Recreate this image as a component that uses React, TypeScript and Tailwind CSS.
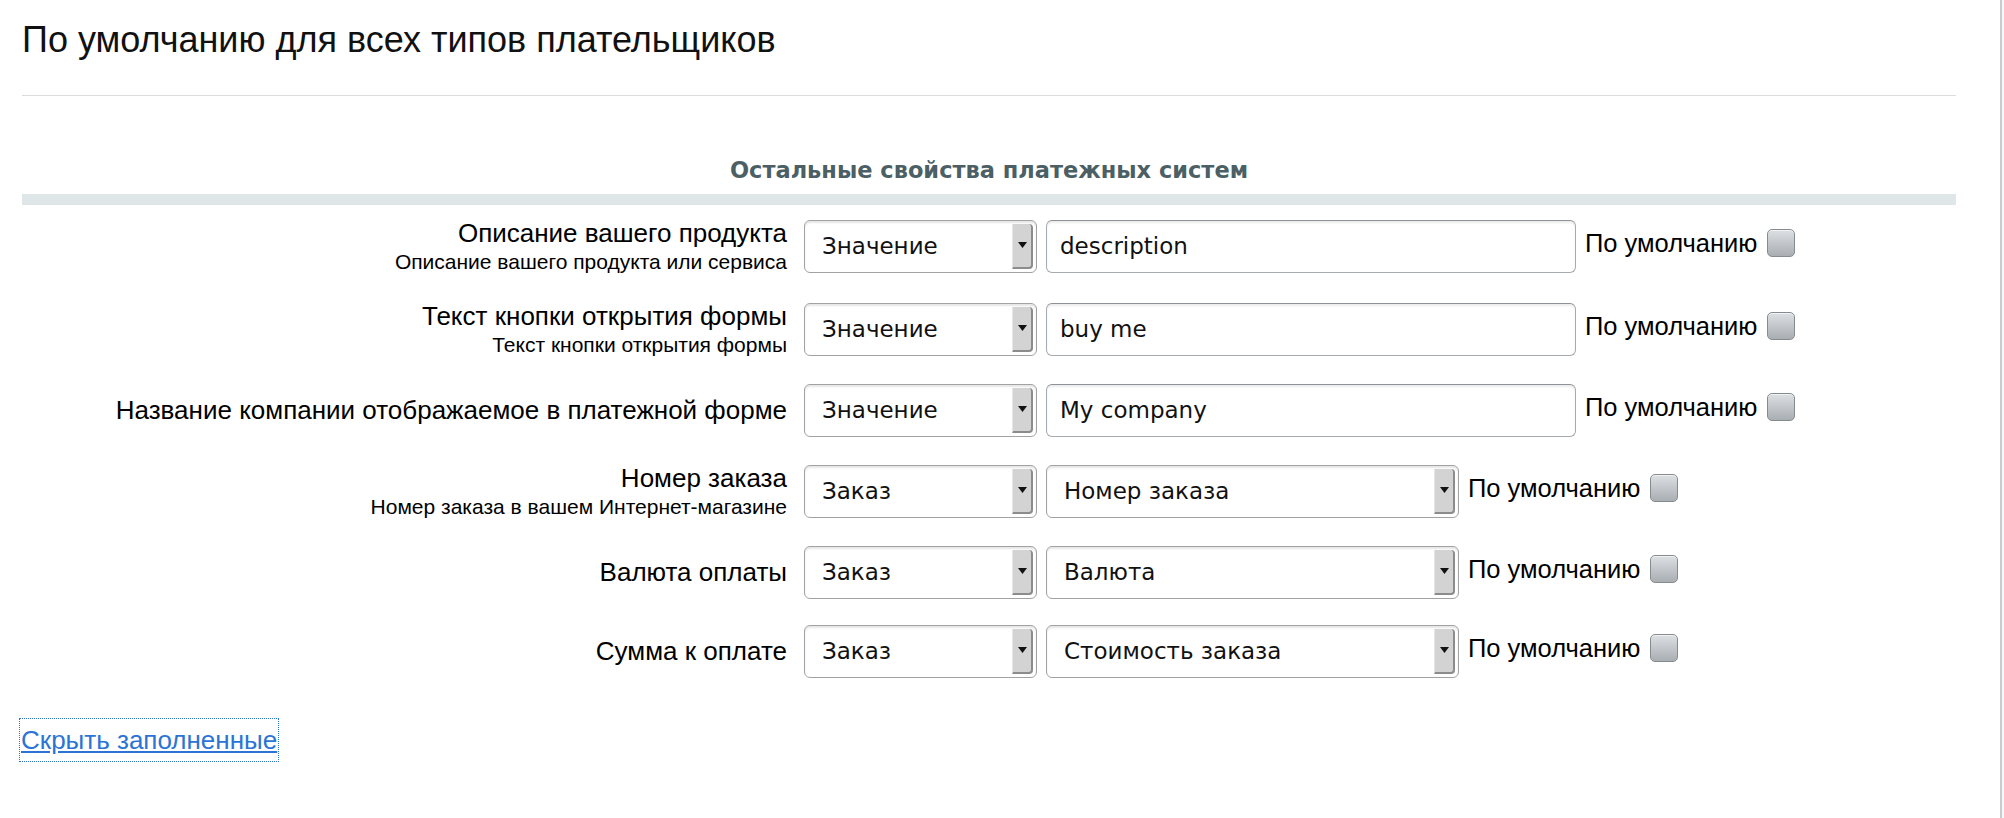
import React from "react";

const sans = "font-['Liberation_Sans',Arial,sans-serif]";
const ctrl = "font-['DejaVu_Sans',Verdana,sans-serif]";

function Arrow() {
  return (
    <div className="absolute bottom-[3px] right-[3px] top-[3px] flex w-[21px] items-center justify-center rounded-r-[4px] border-b-2 border-r-2 border-l border-[#8c8c8c] border-l-[#e6e6e6] bg-[#d3d3d3]">
      <svg width="9" height="6" viewBox="0 0 9 6" className="-mt-[2px]">
        <polygon points="0,0 9,0 4.5,6" fill="#111" />
      </svg>
    </div>
  );
}

function SelectBox({ value, wide }: { value: string; wide?: boolean }) {
  return (
    <div
      className={
        (wide ? "w-[413px] " : "w-[233px] ") +
        "relative flex h-[53px] shrink-0 items-center rounded-[6px] border border-[#a2a2a2] bg-white pl-[17px] shadow-[inset_0_2px_2px_rgba(0,0,0,0.10)]"
      }
    >
      <span className={`${ctrl} text-[23px] leading-[27px] text-[#111]`}>{value}</span>
      <Arrow />
    </div>
  );
}

function TextBox({ value }: { value: string }) {
  return (
    <div className="flex h-[53px] w-[530px] shrink-0 items-center rounded-[6px] border border-[#a6abb0] border-t-[#8d9298] bg-white pl-[13px] shadow-[inset_0_2px_2px_rgba(0,0,0,0.08)]">
      <span className={`${ctrl} text-[23px] leading-[27px] text-[#111]`}>{value}</span>
    </div>
  );
}

function Checkbox() {
  return (
    <div className="h-[28px] w-[28px] rounded-[5px] border border-[#868b90] bg-gradient-to-b from-[#dde0e3] to-[#a9aeb3] shadow-[inset_0_1px_0_rgba(255,255,255,0.6)]" />
  );
}

type Row = {
  label: string;
  sub?: string;
  first: string;
  second: string;
  secondSelect?: boolean;
};

const rows: Row[] = [
  { label: "Описание вашего продукта", sub: "Описание вашего продукта или сервиса", first: "Значение", second: "description" },
  { label: "Текст кнопки открытия формы", sub: "Текст кнопки открытия формы", first: "Значение", second: "buy me" },
  { label: "Название компании отображаемое в платежной форме", first: "Значение", second: "My company" },
  { label: "Номер заказа", sub: "Номер заказа в вашем Интернет-магазине", first: "Заказ", second: "Номер заказа", secondSelect: true },
  { label: "Валюта оплаты", first: "Заказ", second: "Валюта", secondSelect: true },
  { label: "Сумма к оплате", first: "Заказ", second: "Стоимость заказа", secondSelect: true },
];

export default function App() {
  return (
    <div className="flex min-h-[818px] w-[2004px] bg-[#f5f7f8]">
      <div className="w-[2002px] shrink-0 border-r-2 border-[#c8cdd0] bg-white pl-[22px] pr-[44px]">
        <div className={`${sans} pt-[19px] text-[36px] leading-[41px] text-[#111]`}>
          По умолчанию для всех типов плательщиков
        </div>
        <div className="mt-[35px] h-px bg-[#dcdcdc]" />

        <div className="mt-[61px] border-b-[11px] border-[#dfe6e8] pb-[10px] text-center">
          <span className={`${ctrl} text-[22.5px] font-bold leading-[26px] text-[#4b5f65]`}>
            Остальные свойства платежных систем
          </span>
        </div>

        <div>
          {rows.map((r, i) => (
            <div key={i} className="flex items-center py-[13px]">
              <div className={`${sans} w-[782px] shrink-0 pr-[17px] text-right text-black`}>
                <div className="text-[26px] leading-[31px]">{r.label}</div>
                {r.sub && <div className="text-[21px] leading-[26px]">{r.sub}</div>}
              </div>
              <div className="flex items-center gap-[9px]">
                <SelectBox value={r.first} />
                {r.secondSelect ? <SelectBox value={r.second} wide /> : <TextBox value={r.second} />}
                <div className={`${sans} mb-[7px] flex items-center gap-[10px] text-[25.5px] leading-[31px] text-black`}>
                  <span>По умолчанию</span>
                  <Checkbox />
                </div>
              </div>
            </div>
          ))}
        </div>

        <div className="mt-[28px]">
          <a
            href="#"
            className={`${sans} -ml-[2px] inline-block px-[1px] py-[6px] text-[26px] leading-[30px] text-[#2b74d6] underline outline outline-1 outline-dotted outline-[#2b74d6]`}
          >
            Скрыть заполненные
          </a>
        </div>
      </div>
    </div>
  );
}
